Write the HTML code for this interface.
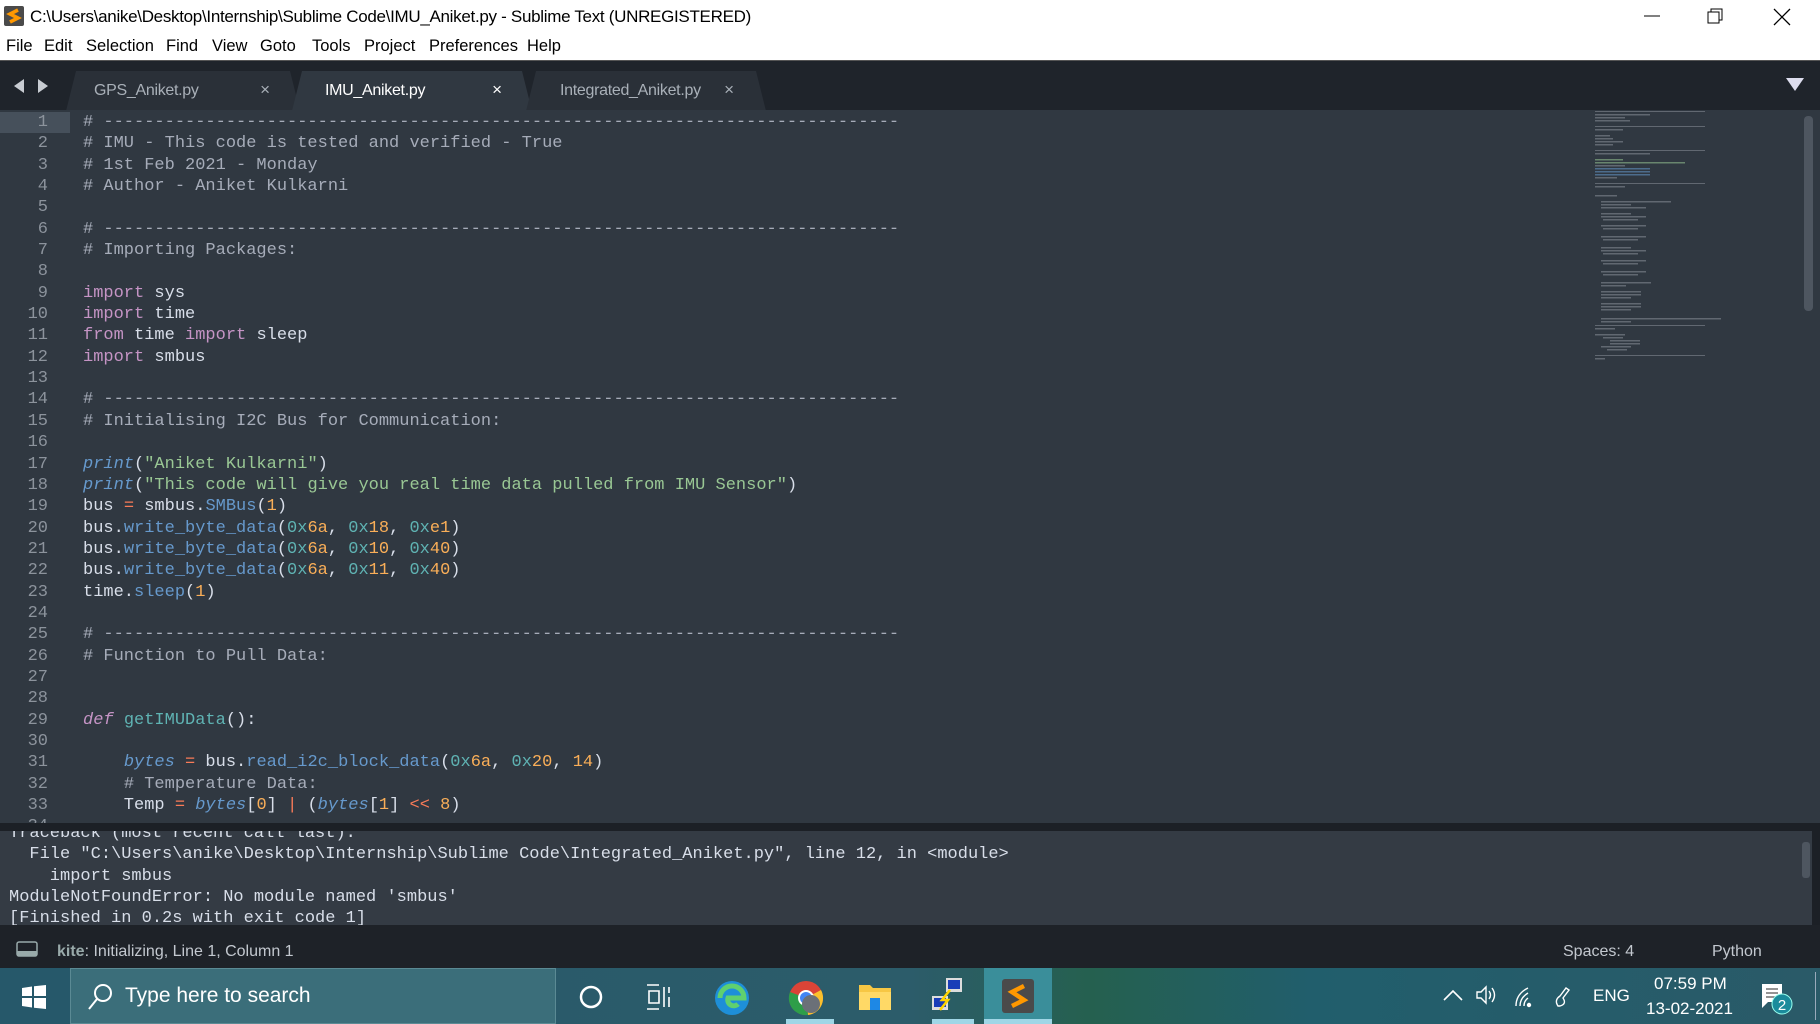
<!DOCTYPE html>
<html><head><meta charset="utf-8"><style>
*{margin:0;padding:0;box-sizing:border-box}
body{width:1820px;height:1024px;overflow:hidden;background:#303841;font-family:"Liberation Sans",sans-serif;position:relative}
.title{position:absolute;left:0;top:0;width:1820px;height:32px;background:#fff;color:#000;font-size:17px}
.title .t{position:absolute;left:30px;top:7px;letter-spacing:-0.3px}
.menu{position:absolute;left:0;top:32px;width:1820px;height:28px;background:#fff;font-size:16.5px;color:#000}
.menu span{position:absolute;top:5px}
.tabbar{position:absolute;left:0;top:60px;width:1820px;height:50px;background:#1f242b;border-top:1px solid #555}
.tab{position:absolute;top:10px;height:40px;background:#2a3038;color:#a9b0b8;font-size:16px;clip-path:polygon(10px 0,calc(100% - 10px) 0,100% 100%,0 100%)}
.tab.act{background:#303841;color:#fff}
.tab .tn{position:absolute;left:33px;top:11px;letter-spacing:-0.3px}
.tab .x{position:absolute;right:30px;top:9px;font-size:17px}
.ed{position:absolute;left:0;top:110px;width:1820px;height:713px;background:#303841;overflow:hidden}
.code{position:absolute;left:0;top:2px;font-family:"Liberation Mono",monospace;font-size:17px;line-height:21.35px;white-space:pre}
.ln{position:absolute;left:0;top:2px;width:48px;text-align:right;color:#8c939c;font-family:"Liberation Mono",monospace;font-size:17px;line-height:21.35px}
.cur{position:absolute;left:0;top:2px;width:70px;height:21.35px;background:#46505b}
.c{color:#a6acb9}.k{color:#c594c5}.f{color:#6699cc}.s{color:#99c794}.o{color:#f97b58}.n{color:#f9ae58}.h{color:#5fb3b3}.i{font-style:italic}.w{color:#d8dee9}
.mm{position:absolute;left:1595px;top:0;width:130px;height:260px}
.sb{position:absolute;left:1804px;top:6px;width:9px;height:195px;background:#4e5660;border-radius:4px}
.sep{position:absolute;left:0;top:823px;width:1820px;height:8px;background:#1c2026}
.out{position:absolute;left:0;top:831px;width:1820px;height:94px;background:#343b44;overflow:hidden;border-right:8px solid #1c2026}
.out pre{position:absolute;left:9px;top:-8px;font-family:"Liberation Mono",monospace;font-size:17px;line-height:21.35px;color:#d8dee9}
.osb{position:absolute;left:1802px;top:842px;width:8px;height:36px;background:#4e5660;border-radius:3px}
.status{position:absolute;left:0;top:925px;width:1820px;height:43px;background:#1e2228;color:#c3c8cf;font-size:16px}
.task{position:absolute;left:0;top:968px;width:1820px;height:56px;background:linear-gradient(90deg,#26586a 0%,#2c5c6a 50%,#25604f 60%,#215e6c 72%,#2a5a68 100%)}
.search{position:absolute;left:70px;top:0;width:486px;height:56px;background:#3b6e7a;border:1px solid #5b8a94;color:#fff;font-size:21px}
</style></head><body>
<div class="title">
<svg style="position:absolute;left:4px;top:6px" width="20" height="20"><rect width="20" height="20" rx="2" fill="#4a4a4a"/><path d="M14 4L6 8L14 12L6 16" stroke="#ff9800" stroke-width="3.5" fill="none"/></svg>
<span class="t">C:\Users\anike\Desktop\Internship\Sublime Code\IMU_Aniket.py - Sublime Text (UNREGISTERED)</span>
<svg style="position:absolute;left:1640px;top:8px" width="170" height="18"><line x1="4" y1="8" x2="20" y2="8" stroke="#000"/><rect x="68" y="4" width="11" height="11" fill="none" stroke="#000"/><path d="M71 4V1H82V12H79" fill="none" stroke="#000"/><path d="M134 1L150 17M150 1L134 17" stroke="#000" stroke-width="1.3"/></svg>
</div>
<div class="menu"><span style="left:6px">File</span><span style="left:44px">Edit</span><span style="left:86px">Selection</span><span style="left:166px">Find</span><span style="left:212px">View</span><span style="left:260px">Goto</span><span style="left:312px">Tools</span><span style="left:364px">Project</span><span style="left:429px">Preferences</span><span style="left:527px">Help</span></div>
<div class="tabbar">
<svg style="position:absolute;left:14px;top:17px" width="34" height="16"><path d="M0 8L10 1V15Z M34 8L24 1V15Z" fill="#c8ccd2"/></svg>
<div class="tab" style="left:66px;width:234px"><span class="tn" style="left:28px">GPS_Aniket.py</span><span class="x">×</span></div>
<div class="tab act" style="left:292px;width:240px"><span class="tn">IMU_Aniket.py</span><span class="x">×</span></div>
<div class="tab" style="left:526px;width:240px"><span class="tn" style="left:34px">Integrated_Aniket.py</span><span class="x" style="right:32px">×</span></div>
<svg style="position:absolute;left:1786px;top:17px" width="18" height="14"><path d="M0 0H18L9 13Z" fill="#dde"/></svg>
</div>
<div class="ed">
<div class="cur"></div>
<div class="ln">1<br>2<br>3<br>4<br>5<br>6<br>7<br>8<br>9<br>10<br>11<br>12<br>13<br>14<br>15<br>16<br>17<br>18<br>19<br>20<br>21<br>22<br>23<br>24<br>25<br>26<br>27<br>28<br>29<br>30<br>31<br>32<br>33<br>34</div>
<div class="code" style="left:83px;color:#d8dee9"><span class="c"># ------------------------------------------------------------------------------</span>
<span class="c"># IMU - This code is tested and verified - True</span>
<span class="c"># 1st Feb 2021 - Monday</span>
<span class="c"># Author - Aniket Kulkarni</span>

<span class="c"># ------------------------------------------------------------------------------</span>
<span class="c"># Importing Packages:</span>

<span class="k">import</span> sys
<span class="k">import</span> time
<span class="k">from</span> time <span class="k">import</span> sleep
<span class="k">import</span> smbus

<span class="c"># ------------------------------------------------------------------------------</span>
<span class="c"># Initialising I2C Bus for Communication:</span>

<span class="f i">print</span>(<span class="s">"Aniket Kulkarni"</span>)
<span class="f i">print</span>(<span class="s">"This code will give you real time data pulled from IMU Sensor"</span>)
bus <span class="o">=</span> smbus.<span class="f">SMBus</span>(<span class="n">1</span>)
bus.<span class="f">write_byte_data</span>(<span class="h">0x</span><span class="n">6a</span>, <span class="h">0x</span><span class="n">18</span>, <span class="h">0x</span><span class="n">e1</span>)
bus.<span class="f">write_byte_data</span>(<span class="h">0x</span><span class="n">6a</span>, <span class="h">0x</span><span class="n">10</span>, <span class="h">0x</span><span class="n">40</span>)
bus.<span class="f">write_byte_data</span>(<span class="h">0x</span><span class="n">6a</span>, <span class="h">0x</span><span class="n">11</span>, <span class="h">0x</span><span class="n">40</span>)
time.<span class="f">sleep</span>(<span class="n">1</span>)

<span class="c"># ------------------------------------------------------------------------------</span>
<span class="c"># Function to Pull Data:</span>


<span class="k i">def</span> <span class="h">getIMUData</span>():

    <span class="f i">bytes</span> <span class="o">=</span> bus.<span class="f">read_i2c_block_data</span>(<span class="h">0x</span><span class="n">6a</span>, <span class="h">0x</span><span class="n">20</span>, <span class="n">14</span>)
    <span class="c"># Temperature Data:</span>
    Temp <span class="o">=</span> <span class="f i">bytes</span>[<span class="n">0</span>] <span class="o">|</span> (<span class="f i">bytes</span>[<span class="n">1</span>] <span class="o">&lt;&lt;</span> <span class="n">8</span>)
</div>
<svg class="mm" viewBox="0 0 130 260">
<g fill="#8a9099" opacity=".55">
<rect x="0" y="1" width="110" height="1"/><rect x="0" y="4" width="55" height="1.5"/><rect x="0" y="7" width="30" height="1.5"/><rect x="0" y="10" width="35" height="1.5"/>
<rect x="0" y="16" width="110" height="1"/><rect x="0" y="19" width="28" height="1.5"/>
<rect x="0" y="25" width="15" height="1.5"/><rect x="0" y="28" width="18" height="1.5"/><rect x="0" y="31" width="28" height="1.5"/><rect x="0" y="34" width="18" height="1.5"/>
<rect x="0" y="40" width="110" height="1"/><rect x="0" y="43" width="55" height="1.5"/>
<rect x="0" y="49" width="28" height="1.5" fill="#99c794"/><rect x="0" y="52" width="90" height="1.5" fill="#99c794"/><rect x="0" y="55" width="30" height="1.5"/>
<rect x="0" y="58" width="55" height="1.5" fill="#6699cc"/><rect x="0" y="61" width="55" height="1.5" fill="#6699cc"/><rect x="0" y="64" width="55" height="1.5" fill="#6699cc"/><rect x="0" y="67" width="22" height="1.5"/>
<rect x="0" y="73" width="110" height="1"/><rect x="0" y="76" width="30" height="1.5"/>
<rect x="0" y="85" width="22" height="1.5"/>
<rect x="6" y="91" width="70" height="1.5"/><rect x="6" y="94" width="30" height="1.5"/><rect x="6" y="97" width="45" height="1.5"/>
<rect x="6" y="103" width="30" height="1.5"/><rect x="6" y="106" width="45" height="1.5"/><rect x="8" y="109" width="35" height="1.5"/>
<rect x="6" y="115" width="45" height="1.5"/><rect x="8" y="118" width="35" height="1.5"/>
<rect x="6" y="126" width="45" height="1.5"/><rect x="8" y="129" width="35" height="1.5"/>
<rect x="6" y="137" width="30" height="1.5"/><rect x="6" y="140" width="45" height="1.5"/><rect x="8" y="143" width="35" height="1.5"/>
<rect x="6" y="150" width="45" height="1.5"/><rect x="8" y="153" width="35" height="1.5"/>
<rect x="6" y="161" width="45" height="1.5"/><rect x="8" y="164" width="35" height="1.5"/>
<rect x="6" y="172" width="50" height="1.5"/><rect x="6" y="175" width="25" height="1.5"/>
<rect x="6" y="181" width="40" height="1.5"/><rect x="6" y="184" width="40" height="1.5"/><rect x="6" y="187" width="30" height="1.5"/>
<rect x="6" y="193" width="40" height="1.5"/><rect x="6" y="196" width="40" height="1.5"/><rect x="6" y="199" width="30" height="1.5"/>
<rect x="6" y="208" width="120" height="1.5"/><rect x="6" y="211" width="30" height="1.5"/>
<rect x="0" y="215" width="110" height="1"/><rect x="0" y="218" width="20" height="1.5"/>
<rect x="0" y="224" width="30" height="1.5"/><rect x="8" y="227" width="20" height="1.5"/><rect x="15" y="230" width="30" height="1.5"/><rect x="15" y="233" width="30" height="1.5"/><rect x="6" y="236" width="30" height="1.5"/><rect x="12" y="239" width="20" height="1.5"/>
<rect x="0" y="245" width="110" height="1"/><rect x="0" y="248" width="10" height="1.5"/>
</g></svg>
<div class="sb"></div>
</div>
<div class="sep"></div>
<div class="out"><pre>Traceback (most recent call last):
  File "C:\Users\anike\Desktop\Internship\Sublime Code\Integrated_Aniket.py", line 12, in &lt;module&gt;
    import smbus
ModuleNotFoundError: No module named 'smbus'
[Finished in 0.2s with exit code 1]</pre></div>
<div class="osb"></div>
<div class="status">
<svg style="position:absolute;left:16px;top:16px" width="22" height="16"><rect x="1" y="1" width="20" height="14" rx="2" fill="none" stroke="#9aa" stroke-width="1.5"/><rect x="1" y="10" width="20" height="5" fill="#9aa"/></svg>
<span style="position:absolute;left:57px;top:18px"><b style="color:#9aa">kite</b>: Initializing, Line 1, Column 1</span>
<span style="position:absolute;left:1563px;top:18px">Spaces: 4</span>
<span style="position:absolute;left:1712px;top:18px">Python</span>
</div>
<div class="task">
<svg style="position:absolute;left:22px;top:17px" width="24" height="24"><path d="M0 3L10 1.5V11H0ZM12 1.2L24 0V11H12ZM0 13H10V22.5L0 21ZM12 13H24V24L12 22.8Z" fill="#fff"/></svg>
<div class="search"><svg style="position:absolute;left:16px;top:14px" width="26" height="28"><circle cx="16" cy="10" r="8" fill="none" stroke="#fff" stroke-width="2"/><line x1="10" y1="16" x2="2" y2="26" stroke="#fff" stroke-width="2"/></svg><span style="position:absolute;left:54px;top:15px">Type here to search</span></div>
<svg style="position:absolute;left:578px;top:16px" width="26" height="26"><circle cx="13" cy="13" r="10" fill="none" stroke="#fff" stroke-width="2.5"/></svg>
<svg style="position:absolute;left:645px;top:15px" width="26" height="28" fill="none" stroke="#fff" stroke-width="1.6"><path d="M2 2H14M2 26H14M4 8H14V20H4Z M19 4V24M24 4V10M24 14V24"/></svg>
<svg style="position:absolute;left:712px;top:10px" width="40" height="40"><circle cx="20" cy="20" r="17" fill="#1e8fd8"/><path d="M8 20a12 12 0 0 1 24 0H16a6 6 0 0 0 10 6" fill="none" stroke="#5fd06f" stroke-width="5"/></svg>
<svg style="position:absolute;left:786px;top:10px" width="40" height="40"><circle cx="20" cy="20" r="17" fill="#db4437"/><path d="M20 20L35 12A17 17 0 0 1 22 37Z" fill="#fbc02d"/><path d="M20 20L22 37A17 17 0 0 1 4 14Z" fill="#2e9e49"/><circle cx="20" cy="20" r="8" fill="#fff"/><circle cx="20" cy="20" r="6" fill="#4285f4"/><circle cx="25" cy="26" r="9" fill="#6b7078"/></svg>
<div style="position:absolute;left:786px;top:51px;width:48px;height:5px;background:#9fd6e6"></div>
<svg style="position:absolute;left:858px;top:12px" width="34" height="34"><path d="M1 5H12L15 8H33V30H1Z" fill="#f7c744"/><rect x="1" y="12" width="32" height="18" fill="#ffd966"/><rect x="12" y="18" width="10" height="12" fill="#1e88e5"/></svg>
<svg style="position:absolute;left:928px;top:8px" width="40" height="40"><rect x="18" y="2" width="16" height="14" fill="#ddd"/><rect x="20" y="4" width="12" height="9" fill="#1a3db8"/><rect x="4" y="20" width="16" height="14" fill="#ddd"/><rect x="6" y="22" width="12" height="9" fill="#1a3db8"/><path d="M22 14L14 24L20 24L12 34" stroke="#ffd400" stroke-width="2.5" fill="none"/></svg>
<div style="position:absolute;left:932px;top:51px;width:42px;height:5px;background:#9fd6e6"></div>
<div style="position:absolute;left:984px;top:0;width:68px;height:56px;background:#3a8e9a"></div>
<svg style="position:absolute;left:1002px;top:11px" width="32" height="34"><rect width="32" height="34" rx="3" fill="#4a4a4a"/><path d="M22 7L10 13L22 21L10 27" stroke="#ff9800" stroke-width="4.5" fill="none"/></svg>
<div style="position:absolute;left:984px;top:51px;width:68px;height:5px;background:#9fd6e6"></div>
<div style="position:absolute;left:0;top:0;width:1820px;height:56px;color:#fff;font-size:17px">
<svg style="position:absolute;left:1443px;top:20px" width="20" height="14"><path d="M1 12L10 3L19 12" fill="none" stroke="#fff" stroke-width="1.6"/></svg>
<svg style="position:absolute;left:1476px;top:16px" width="24" height="22" fill="none" stroke="#fff" stroke-width="1.4"><path d="M1 8H5L10 3V19L5 14H1Z M13 7Q16 11 13 15 M16 4Q21 11 16 18"/></svg>
<svg style="position:absolute;left:1512px;top:16px" width="24" height="24" fill="none" stroke="#fff" stroke-width="1.4"><path d="M4 22Q4 10 16 4 M8 22Q8 14 16 9 M12 22Q12 17 16 14"/><circle cx="17" cy="21" r="1.5" fill="#fff"/></svg>
<svg style="position:absolute;left:1552px;top:16px" width="22" height="24" fill="none" stroke="#fff" stroke-width="1.4"><path d="M6 22Q2 16 8 12L14 4L17 6L11 14Q15 20 8 22Z"/></svg>
<span style="position:absolute;left:1593px;top:18px">ENG</span>
<span style="position:absolute;left:1654px;top:6px">07:59 PM</span>
<span style="position:absolute;left:1646px;top:31px">13-02-2021</span>
<svg style="position:absolute;left:1760px;top:14px" width="34" height="34"><path d="M2 2H22V20H8L2 26Z" fill="#fff"/><path d="M6 7H18M6 11H18M6 15H18" stroke="#555" stroke-width="1.2"/><circle cx="22" cy="22" r="10" fill="#1b8b9c" stroke="#9fe" stroke-width="1"/><text x="22" y="28" fill="#fff" font-size="15" text-anchor="middle" font-family="Liberation Sans">2</text></svg>
<div style="position:absolute;left:1815px;top:4px;width:1px;height:48px;background:#9ab"></div>
</div>
</div>
</body></html>
